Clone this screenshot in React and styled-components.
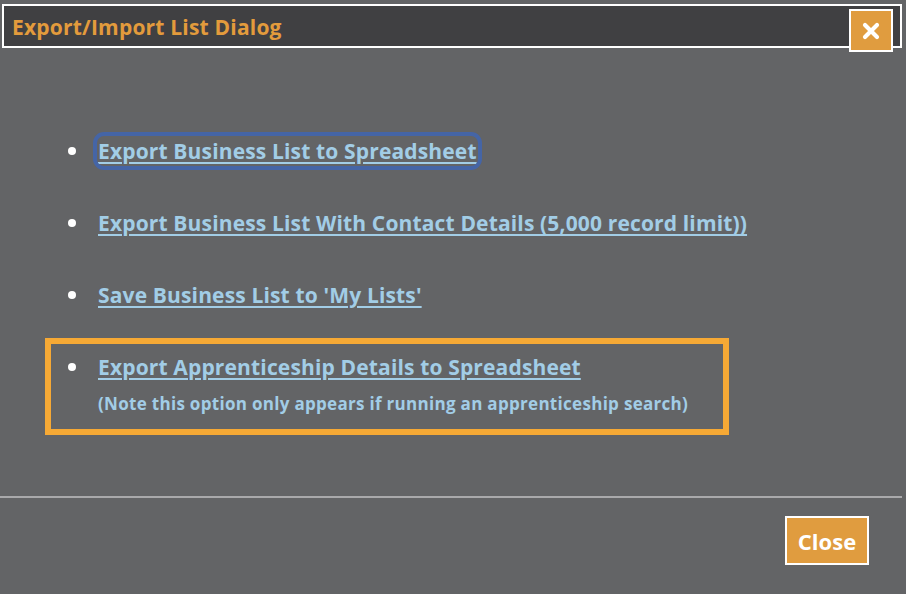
import React from 'react'
import styled, { createGlobalStyle } from 'styled-components'

const GlobalStyle = createGlobalStyle`
    html, body {
        margin: 0;
        padding: 0;
        background: #636466;
        font-family: "Open Sans", Lato, sans-serif;
    }
`

const Dialog = styled.div`
    display: flex;
    flex-direction: column;
    width: 906px;
    height: 594px;
    background: #636466;
`

const Header = styled.header`
    position: relative;
    display: flex;
    align-items: center;
    box-sizing: border-box;
    height: 44px;
    margin: 4px 4px 0 2px;
    padding: 2px 0 0 8px;
    border: 2px solid #ffffff;
    background: #404042;
`

const Title = styled.h1`
    margin: 0;
    color: #e39b3c;
    font-size: 21px;
    font-weight: 700;
    letter-spacing: 0.2px;
`

const CloseIcon = styled.button`
    position: absolute;
    top: 3px;
    right: 7px;
    display: flex;
    align-items: center;
    justify-content: center;
    box-sizing: border-box;
    width: 44px;
    height: 43px;
    padding: 0;
    border: 2px solid #ffffff;
    background: #e09c3f;
    cursor: pointer;
`

const Body = styled.div`
    box-sizing: border-box;
    height: 448px;
    padding: 67px 0 0 45px;
`

const List = styled.ul`
    margin: 0;
    padding: 0;
    list-style: none;
`

const Item = styled.li`
    display: flex;
    align-items: center;
    gap: 22px;
    height: 72px;
    padding-left: 23px;
`

const Bullet = styled.span`
    flex: 0 0 auto;
    width: 8px;
    height: 8px;
    border-radius: 50%;
    background: #ffffff;
`

const Link = styled.a`
    color: #a2cde6;
    font-size: 21px;
    font-weight: 700;
    letter-spacing: 0.15px;
    text-decoration: underline;
    text-decoration-thickness: 2px;
    text-underline-offset: 3px;
    text-decoration-color: #a2cde6;
    cursor: pointer;
    border-radius: 6px;
    outline: ${p => (p.$focused ? '4px solid #4565a6' : 'none')};
    outline-offset: 1px;
`

const Highlight = styled.li`
    display: flex;
    flex-direction: column;
    gap: 10px;
    width: 684px;
    box-sizing: border-box;
    margin-top: 7px;
    padding: 8px 0 13px 17px;
    border: 6px solid #f6a935;
`

const HighlightRow = styled.div`
    display: flex;
    align-items: center;
    gap: 22px;
    height: 30px;
`

const Note = styled.div`
    padding-left: 30px;
    color: #a2cde6;
    font-size: 17px;
    font-weight: 700;
    line-height: 24px;
    letter-spacing: 0.3px;
`

const Separator = styled.hr`
    margin: 0 4px 0 0;
    height: 2px;
    border: none;
    background: #a9a9ab;
`

const Footer = styled.footer`
    display: flex;
    justify-content: flex-end;
    padding: 18px 37px 0 0;
`

const Button = styled.button`
    box-sizing: border-box;
    width: 84px;
    height: 49px;
    padding: 0;
    border: 2px solid #ffffff;
    background: #e09c3f;
    color: #ffffff;
    font-family: "Open Sans", Lato, sans-serif;
    font-size: 22px;
    font-weight: 700;
    cursor: pointer;
`

const links = [
    'Export Business List to Spreadsheet',
    'Export Business List With Contact Details (5,000 record limit))',
    "Save Business List to 'My Lists'",
]

export default function App() {
    return (
        <>
            <GlobalStyle />
            <Dialog>
                <Header>
                    <Title>Export/Import List Dialog</Title>
                    <CloseIcon aria-label="Close">
                        <svg width="18" height="18" viewBox="0 0 18 18">
                            <path
                                d="M3 3 L15 15 M15 3 L3 15"
                                stroke="#ffffff"
                                strokeWidth="4.2"
                                strokeLinecap="round"
                            />
                        </svg>
                    </CloseIcon>
                </Header>
                <Body>
                    <List>
                        {links.map((text, i) => (
                            <Item key={text}>
                                <Bullet />
                                <Link $focused={i === 0}>{text}</Link>
                            </Item>
                        ))}
                        <Highlight>
                            <HighlightRow>
                                <Bullet />
                                <Link>Export Apprenticeship Details to Spreadsheet</Link>
                            </HighlightRow>
                            <Note>(Note this option only appears if running an apprenticeship search)</Note>
                        </Highlight>
                    </List>
                </Body>
                <Separator />
                <Footer>
                    <Button>Close</Button>
                </Footer>
            </Dialog>
        </>
    )
}
